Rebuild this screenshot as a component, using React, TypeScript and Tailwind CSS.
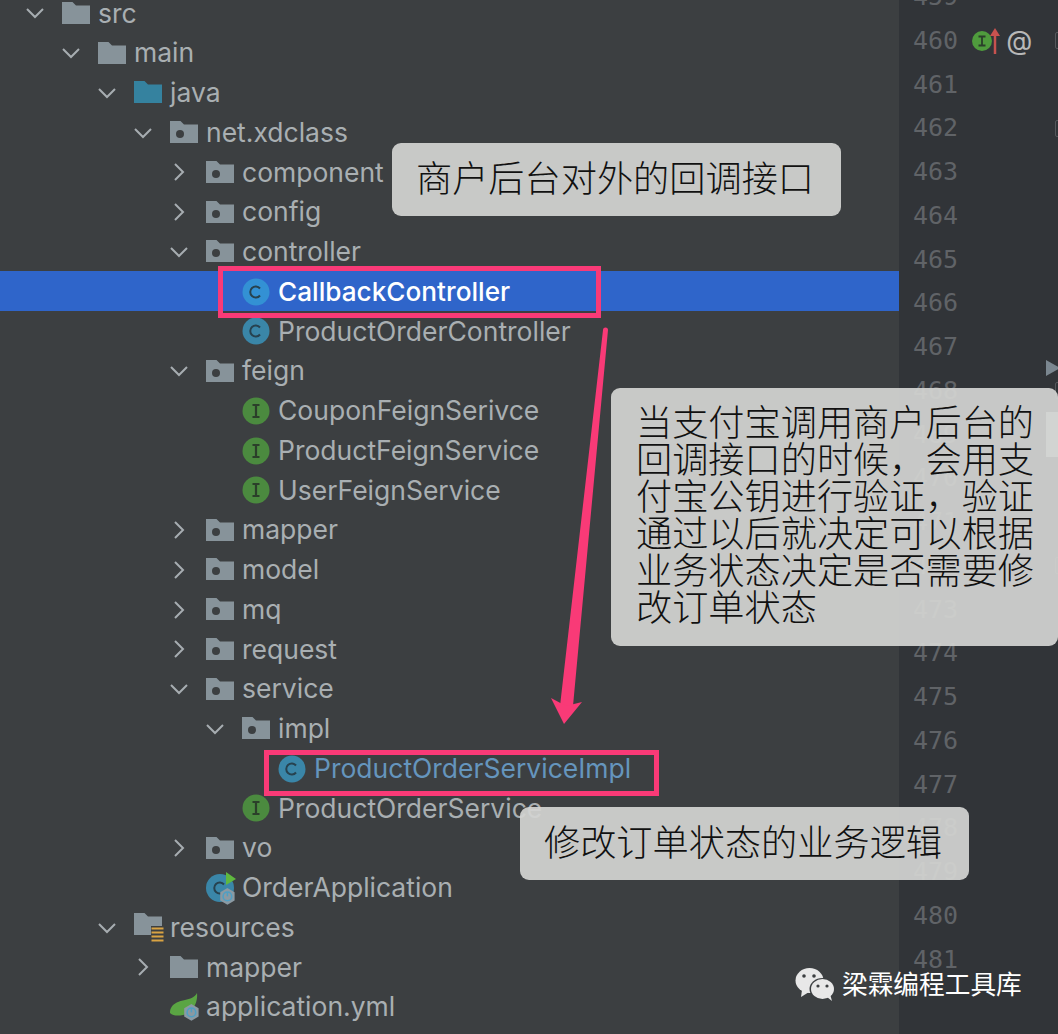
import { ReactNode } from "react";

type Kind = "src" | "java" | "pkg" | "res" | "plain" | "cls" | "clsActive" | "iface" | "boot" | "yml";

type Row = {
  name: string;
  depth: number;
  kind: Kind;
  open?: boolean;
  closed?: boolean;
  selected?: boolean;
  blue?: boolean;
};

const ROWS: Row[] = [
  { name: "src", depth: 0, kind: "src", open: true },
  { name: "main", depth: 1, kind: "src", open: true },
  { name: "java", depth: 2, kind: "java", open: true },
  { name: "net.xdclass", depth: 3, kind: "pkg", open: true },
  { name: "component", depth: 4, kind: "pkg", closed: true },
  { name: "config", depth: 4, kind: "pkg", closed: true },
  { name: "controller", depth: 4, kind: "pkg", open: true },
  { name: "CallbackController", depth: 5, kind: "clsActive", selected: true },
  { name: "ProductOrderController", depth: 5, kind: "cls" },
  { name: "feign", depth: 4, kind: "pkg", open: true },
  { name: "CouponFeignSerivce", depth: 5, kind: "iface" },
  { name: "ProductFeignService", depth: 5, kind: "iface" },
  { name: "UserFeignService", depth: 5, kind: "iface" },
  { name: "mapper", depth: 4, kind: "pkg", closed: true },
  { name: "model", depth: 4, kind: "pkg", closed: true },
  { name: "mq", depth: 4, kind: "pkg", closed: true },
  { name: "request", depth: 4, kind: "pkg", closed: true },
  { name: "service", depth: 4, kind: "pkg", open: true },
  { name: "impl", depth: 5, kind: "pkg", open: true },
  { name: "ProductOrderServiceImpl", depth: 6, kind: "cls", blue: true },
  { name: "ProductOrderService", depth: 5, kind: "iface" },
  { name: "vo", depth: 4, kind: "pkg", closed: true },
  { name: "OrderApplication", depth: 4, kind: "boot" },
  { name: "resources", depth: 2, kind: "res", open: true },
  { name: "mapper", depth: 3, kind: "plain", closed: true },
  { name: "application.yml", depth: 3, kind: "yml" },
];

const LINE_NUMBERS = Array.from({ length: 23 }, (_, i) => 459 + i);
const FOLD_MARKS = [460, 462, 468, 472];

const FOLDER = "M0 0H10.5L14 3.5H28V22H0Z";

function Folder({ color, dot }: { color: string; dot?: boolean }) {
  return (
    <svg width="28" height="23" viewBox="0 0 28 23">
      <path d={FOLDER} fill={color} />
      {dot && <circle cx="10" cy="13" r="4" fill="#3c3f41" />}
    </svg>
  );
}

function Hex() {
  return (
    <g>
      <path d="M7 0L13 3.5V10.5L7 14L1 10.5V3.5Z" fill="#8b9aa3" />
      <circle cx="7" cy="7" r="3.6" fill="none" stroke="#4f9fc4" strokeWidth="1.3" />
      <path d="M7 3.5V7" stroke="#4f9fc4" strokeWidth="1.3" />
    </g>
  );
}

function FileIcon({ kind }: { kind: Kind }) {
  if (kind === "src" || kind === "plain") return <Folder color="#87939a" />;
  if (kind === "java") return <Folder color="#35829f" />;
  if (kind === "pkg") return <Folder color="#87939a" dot />;
  if (kind === "res")
    return (
      <svg width="30" height="30" viewBox="0 0 30 30" className="overflow-visible">
        <path d={FOLDER} fill="#87939a" />
        <rect x="17" y="13" width="13" height="15" fill="#3c3f41" />
        <path d="M17.500 15.500H29.500M17.500 19.500H29.500M17.500 23.500H29.500M17.500 27.500H29.500" stroke="#d9a343" strokeWidth="2.200" />
      </svg>
    );
  if (kind === "cls" || kind === "clsActive")
    return (
      <svg width="28" height="28" viewBox="0 0 28 28">
        <circle cx="14" cy="14" r="13.500" fill={kind === "cls" ? "#3a86a8" : "#3391d4"} />
        <path d="M18 10.500A5.500 5.500 0 1 0 18 17.500" fill="none" stroke="#27424f" strokeWidth="2" />
      </svg>
    );
  if (kind === "iface")
    return (
      <svg width="28" height="28" viewBox="0 0 28 28">
        <circle cx="14" cy="14" r="13.500" fill="#4b8a3f" />
        <path d="M10.500 8H17.500M10.500 20H17.500M14 8V20" fill="none" stroke="#2b3f2a" strokeWidth="2.200" />
      </svg>
    );
  if (kind === "boot")
    return (
      <svg width="30" height="32" viewBox="0 0 30 32" className="overflow-visible">
        <circle cx="14" cy="16" r="14" fill="#3a86a8" />
        <path d="M18 12.500A5.500 5.500 0 1 0 18 19.500" fill="none" stroke="#27424f" strokeWidth="2" />
        <path d="M20 0L30 7L20 13Z" fill="#5fb83f" />
        <g transform="translate(13 16) scale(1.200)">
          <Hex />
        </g>
      </svg>
    );
  return (
    <svg width="30" height="28" viewBox="0 0 30 28" className="overflow-visible">
      <path d="M0 20C0 10 10 8 15 7C20 6 25 4 27 0C28 8 24 20 13 22C8 23 3 23 0 20Z" fill="#5aa543" />
      <g transform="translate(13 11) scale(1.200)">
        <Hex />
      </g>
    </svg>
  );
}

function Chevron({ open }: { open?: boolean }) {
  return (
    <svg width="18" height="18" viewBox="0 0 18 18">
      <path
        d={open ? "M1 5L9 13L17 5" : "M5 1L13 9L5 17"}
        fill="none"
        stroke="#a7adb1"
        strokeWidth="2"
      />
    </svg>
  );
}

function TreeRow({ row }: { row: Row }) {
  return (
    <div
      className={`flex h-[39.75px] shrink-0 items-center pt-[1px] ${row.selected ? "bg-[#2f65ca]" : ""}`}
      style={{ paddingLeft: 26 + row.depth * 36 }}
    >
      <div className="flex w-[36px] shrink-0 items-center">
        {(row.open || row.closed) && <Chevron open={row.open} />}
      </div>
      <div className="flex w-[36px] shrink-0 items-center">
        <FileIcon kind={row.kind} />
      </div>
      <span
        className={`whitespace-nowrap ${
          row.selected
            ? "text-[26.2px] font-medium text-white"
            : row.blue
              ? "text-[26.5px] text-[#6595bd]"
              : "text-[26.5px] text-[#a9afb2]"
        }`}
      >
        {row.name}
      </span>
    </div>
  );
}

function LineRow({ n }: { n: number }) {
  return (
    <div className="flex h-[43.75px] shrink-0 items-center">
      <span className="font-['DejaVu_Sans_Mono',monospace] text-[25px] text-[#606367]">{n}</span>
      {n === 460 && (
        <div className="ml-[12px] flex items-center">
          <svg width="34" height="30" viewBox="0 0 34 30">
            <circle cx="12" cy="15" r="10" fill="#4f9c3d" />
            <path d="M8.500 10.500H15.500M8.500 19.500H15.500M12 10.500V19.500" stroke="#2b3f2a" strokeWidth="1.800" fill="none" />
            <path d="M25 28V8" stroke="#c7524f" strokeWidth="2.500" />
            <path d="M20 10L25 2L30 10Z" fill="#c7524f" />
          </svg>
          <span className="ml-[2px] text-[27px] leading-none text-[#b8b8b8]">@</span>
        </div>
      )}
      {FOLD_MARKS.includes(n) && (
        <div className="-mr-[3px] ml-auto h-[17px] w-[6px] rounded-[2px] border border-[#55585c]" />
      )}
    </div>
  );
}

function Callout({ className, children }: { className: string; children: ReactNode }) {
  return (
    <div
      className={`absolute rounded-[9px] bg-[#d3d4d2]/[0.93] text-[36.2px] font-light leading-[37px] text-[#111] ${className}`}
    >
      {children}
    </div>
  );
}

export default function App() {
  return (
    <div className="relative flex h-[1034px] w-[1058px] overflow-hidden bg-[#3c3f41] font-['Inter','Noto_Sans_CJK_SC',sans-serif]">
      <div className="-mt-[7px] flex w-[899px] shrink-0 flex-col">
        {ROWS.map((row) => (
          <TreeRow key={row.name + row.depth} row={row} />
        ))}
      </div>

      <div className="relative -mt-[25px] flex flex-1 flex-col bg-[#313438] pl-[14px]">
        {LINE_NUMBERS.map((n) => (
          <LineRow key={n} n={n} />
        ))}
        <div className="absolute left-[147px] top-[385px] h-0 w-0 border-y-[8px] border-l-[14px] border-y-transparent border-l-[#7b8790]" />
        <div className="absolute left-[147px] top-[437px] h-[45px] w-[12px] bg-[#c6cbd0]" />
      </div>

      <Callout className="left-[392px] top-[143px] flex h-[73px] w-[449px] items-center pb-[1px] pl-[24px]">
        商户后台对外的回调接口
      </Callout>
      <Callout className="left-[611px] top-[388px] h-[258px] w-[447px] pl-[25px] pr-[15px] pt-[17px]">
        当支付宝调用商户后台的回调接口的时候，会用支付宝公钥进行验证，验证通过以后就决定可以根据业务状态决定是否需要修改订单状态
      </Callout>
      <Callout className="left-[520px] top-[807px] flex h-[73px] w-[449px] items-center pb-[1px] pl-[24px]">
        修改订单状态的业务逻辑
      </Callout>

      <div className="absolute left-[218px] top-[266px] h-[52px] w-[383px] border-[5px] border-[#f93a77]" />
      <div className="absolute left-[264px] top-[750px] h-[46px] w-[395px] border-[5px] border-[#f93a77]" />

      <svg className="absolute left-[540px] top-[320px]" width="80" height="410" viewBox="0 0 80 410">
        <path d="M63 10A2.500 2.500 0 0 1 68 10L33 386L20 386Z" fill="#f93a77" />
        <path d="M11 378L26 386L42 382L24 404Z" fill="#f93a77" />
      </svg>

      <div className="absolute left-[795px] top-[967px] flex items-center">
        <svg width="40" height="36" viewBox="0 0 40 36">
          <ellipse cx="14.500" cy="13.500" rx="14" ry="12.500" fill="#e8e8e8" />
          <path d="M7 23L6 30L14 25Z" fill="#e8e8e8" />
          <ellipse cx="27.500" cy="22" rx="13" ry="11" fill="#3c3f41" />
          <ellipse cx="27.500" cy="22" rx="11.500" ry="10" fill="#e8e8e8" />
          <path d="M32 30L37 34L35 27Z" fill="#e8e8e8" />
          <circle cx="9" cy="9" r="1.800" fill="#3c3f41" />
          <circle cx="19" cy="9" r="1.800" fill="#3c3f41" />
          <circle cx="23" cy="19" r="1.600" fill="#3c3f41" />
          <circle cx="32" cy="19" r="1.600" fill="#3c3f41" />
        </svg>
        <span className="ml-[7px] whitespace-nowrap text-[25.700px] leading-none text-white">梁霖编程工具库</span>
      </div>
    </div>
  );
}
